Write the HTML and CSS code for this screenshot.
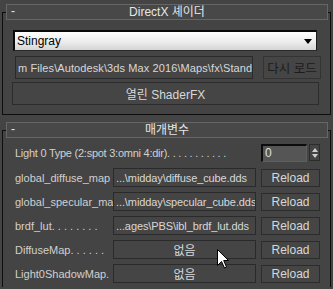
FILE: index.html
```html
<!DOCTYPE html>
<html lang="ko">
<head>
  <meta charset="UTF-8" />
  <title>DirectX 셰이더</title>
  <link rel="stylesheet" href="styles.css">
</head>
<body>

  <!-- DirectX shader rollout -->
  <div class="rollout">
    <div class="rollout-head"><span class="minus">-</span><span class="title">DirectX 셰이더</span></div>
    <div class="dropdown"><span class="dd-text">Stingray</span><span class="dd-arrow"></span></div>
    <div class="path-row">
      <div class="field path"><span>m Files\Autodesk\3ds Max 2016\Maps\fx\Standa</span></div>
      <div class="btn dim">다시 로드</div>
    </div>
    <div class="btn wide">열린 ShaderFX</div>
  </div>

  <!-- Parameters rollout -->
  <div class="rollout params">
    <div class="rollout-head"><span class="minus">-</span><span class="title">매개변수</span></div>

    <div class="row first-row">
      <span class="label long">Light 0 Type (2:spot 3:omni 4:dir). . . . . . . . . . .</span>
      <div class="spin-field">0</div>
      <div class="spin-arrows"><span class="up"></span><span class="down"></span></div>
    </div>
    <div class="row">
      <span class="label">global_diffuse_map</span>
      <div class="field map">...\midday\diffuse_cube.dds</div>
      <div class="btn reload">Reload</div>
    </div>
    <div class="row">
      <span class="label">global_specular_ma</span>
      <div class="field map">...\midday\specular_cube.dds</div>
      <div class="btn reload">Reload</div>
    </div>
    <div class="row">
      <span class="label">brdf_lut. . . . . . . .</span>
      <div class="field map">...ages\PBS\ibl_brdf_lut.dds</div>
      <div class="btn reload">Reload</div>
    </div>
    <div class="row">
      <span class="label">DiffuseMap. . . . . .</span>
      <div class="field map none">없음</div>
      <div class="btn reload">Reload</div>
    </div>
    <div class="row">
      <span class="label">Light0ShadowMap.</span>
      <div class="field map none">없음</div>
      <div class="btn reload">Reload</div>
    </div>
  </div>

  <!-- mouse pointer -->
  <svg class="cursor" width="13" height="20" viewBox="0 0 13 20">
    <path d="M0.5 0.5 L0.5 16.5 L4.5 12.5 L7.5 19 L9.5 18 L6.7 11.5 L11.5 11.5 Z" fill="#fff" stroke="#000" stroke-width="1"/>
  </svg>

</body>
</html>
```

FILE: styles.css
```css
html, body { margin: 0; height: 100%; }
body { background: #444444; font-family: "Liberation Sans", Arial, "Noto Sans CJK KR", sans-serif; font-size: 11px; color: #d4d4d4; position: relative; overflow: hidden; }

.rollout { margin: 12px 2px 0 2px; border: 1px solid #0e0e0e; padding-bottom: 9px; }
.rollout.params { margin-top: 15px; border-bottom: none; padding-bottom: 4px; }
.rollout-head { margin: -9px 2px 0 3px; height: 14px; border: 1px solid #666; background: #484848; position: relative; display: flex; justify-content: center; align-items: center; color: #e6e6e6; font-size: 12px; }
.rollout-head .minus { position: absolute; left: 4px; top: -1px; }
.rollout-head .title { line-height: 14px; }

.dropdown { margin: 10px 13px 0 10px; height: 18px; border-top: 2px solid #0a0a0a; border-left: 2px solid #0a0a0a; border-right: 1px solid #1a1a1a; border-bottom: 1px solid #2a2a2a; background: linear-gradient(#ffffff, #ececec 55%, #d4d4d4); display: flex; align-items: center; justify-content: space-between; color: #000; font-size: 12px; }
.dd-text { padding-left: 2px; }
.dd-arrow { width: 0; height: 0; border-left: 4px solid transparent; border-right: 4px solid transparent; border-top: 5px solid #000; margin-right: 4px; }

.path-row { display: flex; gap: 10px; margin: 5px 0 0 12px; height: 23px; }
.field { box-sizing: border-box; border: 1px solid #2a2a2a; background: #454545; display: flex; align-items: center; white-space: nowrap; overflow: hidden; color: #d8d8d8; font-size: 11px; }
.field.path { width: 238px; padding-left: 2px; font-size: 11px; letter-spacing: 0.1px; }
.btn { box-sizing: border-box; border: 1px solid #2c2c2c; background: #454545; display: flex; align-items: center; justify-content: center; color: #d8d8d8; font-size: 12px; white-space: nowrap; }
.btn.dim { width: 58px; color: #1c1c1c; border-color: #333; font-size: 12.5px; }
.btn.wide { margin: 3px 0 0 9px; width: 307px; height: 23px; }

.row { display: flex; align-items: center; height: 19px; margin: 5px 0 0 12px; }
.row.first-row { margin-top: 5px; margin-bottom: 6px; }
.label { width: 98px; white-space: nowrap; overflow: hidden; color: #d0d0d0; }
.label.long { width: 246px; letter-spacing: -0.25px; }
.field.map { width: 143px; height: 19px; padding-left: 2px; letter-spacing: -0.1px; }
.field.none { justify-content: center; padding-left: 0; font-size: 12px; }
.btn.reload { width: 59px; height: 18px; margin-left: 5px; }

.spin-field { box-sizing: border-box; width: 46px; height: 18px; border-top: 2px solid #0c0c0c; border-left: 2px solid #0c0c0c; border-right: 1px solid #5e5e5e; border-bottom: 1px solid #5e5e5e; background: #555; color: #e0e0e0; font-size: 12px; padding-left: 2px; line-height: 15px; }
.spin-arrows { box-sizing: border-box; width: 11px; height: 17px; margin-left: 2px; border: 1px solid #2c2c2c; display: flex; flex-direction: column; justify-content: center; align-items: center; gap: 2px; }
.spin-arrows .up { width: 0; height: 0; border-left: 3px solid transparent; border-right: 3px solid transparent; border-bottom: 4px solid #d0d0d0; }
.spin-arrows .down { width: 0; height: 0; border-left: 3px solid transparent; border-right: 3px solid transparent; border-top: 4px solid #d0d0d0; }

.cursor { position: absolute; left: 217px; top: 249px; }
```
